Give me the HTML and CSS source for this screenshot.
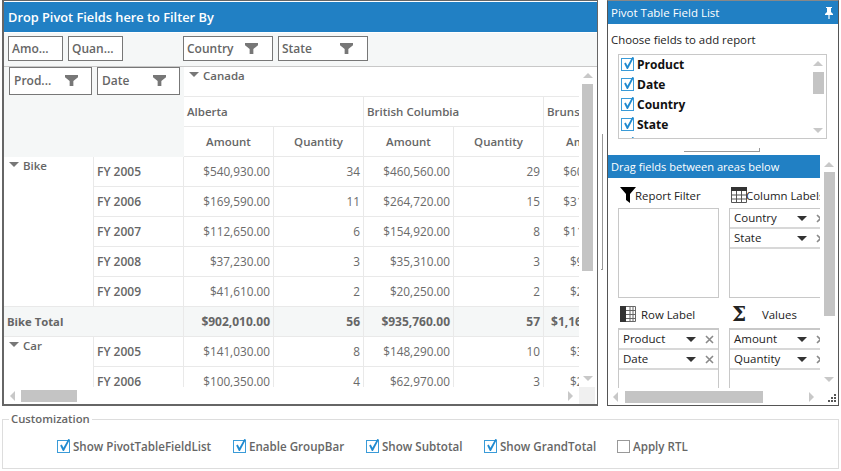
FILE: index.html
```html
<!DOCTYPE html>
<html>
<head>
	<meta charset="utf-8" />
	<title>Pivot Table</title>
	<link rel="stylesheet" href="styles.css">
</head>
<body>
<svg class="defs" width="0" height="0">
	<defs>
		<symbol id="funnel" viewBox="0 0 14 14"><path d="M0 1h14v2.500L9 7.500V13H5V7.500L0 3.500z"/></symbol>
		<symbol id="tick" viewBox="0 0 12 12"><path d="M2 6L3.500 5 5 8 9.500 0 11 .5 5.500 11H4.500z"/></symbol>
		<symbol id="cross" viewBox="0 0 9 9"><path d="M1 1l7 7M8 1L1 8" fill="none" stroke="#8a8a8a" stroke-width="1.6"/></symbol>
	</defs>
</svg>
<div class="top">
	<div class="pivot">
		<div class="pivot-head">Drop Pivot Fields here to Filter By</div>
		<div class="group-bar">
			<span class="chip chip-small">Amo...</span>
			<span class="chip chip-small">Quan...</span>
			<span class="chip chip-wide chip-first">Country<svg class="funnel"><use href="#funnel"/></svg></span>
			<span class="chip chip-wide">State<svg class="funnel"><use href="#funnel"/></svg></span>
		</div>
		<div class="pivot-body">
			<div class="grid-clip">
				<div class="grid">
					<div class="corner">
						<span class="chip chip-row">Prod...<svg class="funnel"><use href="#funnel"/></svg></span>
						<span class="chip chip-row">Date<svg class="funnel"><use href="#funnel"/></svg></span>
					</div>
					<div class="cell head-country"><i class="arrow"></i>Canada</div>

					<div class="cell state span2">Alberta</div>
					<div class="cell state span2">British Columbia</div>
					<div class="cell state span2">Brunswick</div>

					<div class="cell measure">Amount</div>
					<div class="cell measure">Quantity</div>
					<div class="cell measure">Amount</div>
					<div class="cell measure">Quantity</div>
					<div class="cell measure">Amount</div>
					<div class="cell measure">Quantity</div>

					<div class="cell group rows5"><i class="arrow"></i>Bike</div>
					<div class="cell year">FY 2005</div>
					<div class="cell num">$540,930.00</div><div class="cell num">34</div><div class="cell num">$460,560.00</div><div class="cell num">29</div><div class="cell num">$601,240.00</div><div class="cell num">31</div>
					<div class="cell year">FY 2006</div>
					<div class="cell num">$169,590.00</div><div class="cell num">11</div><div class="cell num">$264,720.00</div><div class="cell num">15</div><div class="cell num">$317,450.00</div><div class="cell num">17</div>
					<div class="cell year">FY 2007</div>
					<div class="cell num">$112,650.00</div><div class="cell num">6</div><div class="cell num">$154,920.00</div><div class="cell num">8</div><div class="cell num">$118,330.00</div><div class="cell num">7</div>
					<div class="cell year">FY 2008</div>
					<div class="cell num">$37,230.00</div><div class="cell num">3</div><div class="cell num">$35,310.00</div><div class="cell num">3</div><div class="cell num">$97,380.00</div><div class="cell num">5</div>
					<div class="cell year">FY 2009</div>
					<div class="cell num">$41,610.00</div><div class="cell num">2</div><div class="cell num">$20,250.00</div><div class="cell num">2</div><div class="cell num">$25,650.00</div><div class="cell num">2</div>

					<div class="cell total span2 total-label">Bike Total</div>
					<div class="cell total num">$902,010.00</div><div class="cell total num">56</div><div class="cell total num">$935,760.00</div><div class="cell total num">57</div><div class="cell total num">$1,160,050.00</div><div class="cell total num">62</div>

					<div class="cell group rows2"><i class="arrow"></i>Car</div>
					<div class="cell year">FY 2005</div>
					<div class="cell num">$141,030.00</div><div class="cell num">8</div><div class="cell num">$148,290.00</div><div class="cell num">10</div><div class="cell num">$39,570.00</div><div class="cell num">3</div>
					<div class="cell year">FY 2006</div>
					<div class="cell num">$100,350.00</div><div class="cell num">4</div><div class="cell num">$62,970.00</div><div class="cell num">3</div><div class="cell num">$27,340.00</div><div class="cell num">2</div>
				</div>
			</div>
			<div class="vbar pivot-vbar"><i class="up"></i><b class="pivot-vthumb"></b><i class="down"></i></div>
			<div class="hbar pivot-hbar"><i class="left"></i><b class="pivot-hthumb"></b><i class="right"></i></div>
			<div class="sb-corner"></div>
		</div>
	</div>

	<div class="splitter"></div>

	<div class="fields">
		<div class="fields-title">Pivot Table Field List
			<svg class="pin" viewBox="0 0 10 12" width="10" height="12"><path d="M2 0h6v1H7v4l2 2v1H5.600v4h-1.200V8H1V7l2-2V1H2z" fill="#fff"/></svg>
		</div>
		<div class="choose">Choose fields to add report</div>
		<div class="field-box">
			<ul class="field-list">
				<li><span class="check"><svg><use href="#tick"/></svg></span>Product</li>
				<li><span class="check"><svg><use href="#tick"/></svg></span>Date</li>
				<li><span class="check"><svg><use href="#tick"/></svg></span>Country</li>
				<li><span class="check"><svg><use href="#tick"/></svg></span>State</li>
				<li><span class="check"><svg><use href="#tick"/></svg></span>Amount</li>
			</ul>
			<div class="vbar list-vbar"><i class="up"></i><b class="list-vthumb"></b><i class="down"></i></div>
		</div>
		<div class="list-grip"></div>
		<div class="areas-wrap">
			<div class="areas-clip">
				<div class="areas-title">Drag fields between areas below</div>
				<div class="areas">
					<div class="area">
						<div class="area-label"><svg class="icon-filter" viewBox="0 0 16 16" width="16" height="16"><path d="M0 0h16L10 7v9l-4-3V7z"/></svg>Report Filter</div>
						<div class="drop"></div>
					</div>
					<div class="area">
						<div class="area-label">
							<svg class="icon-grid" viewBox="0 0 16 16" width="16" height="16"><rect width="16" height="4" fill="#333"/><path d="M.5 4v11.500h15V4M5.500 4v11M10.500 4v11M0 8h16M0 12h16" fill="none" stroke="#555"/></svg>Column Labels
						</div>
						<div class="drop">
							<div class="pill">Country<i class="caret"></i><svg class="x"><use href="#cross"/></svg></div>
							<div class="pill">State<i class="caret"></i><svg class="x"><use href="#cross"/></svg></div>
						</div>
					</div>
					<div class="area">
						<div class="area-label label-low">
							<svg class="icon-row" viewBox="0 0 16 16" width="16" height="16"><rect width="6" height="16" fill="#333"/><path d="M6 .5h9.500v15H6M10 0v16M13 0v16M6 4.500h10M6 8.500h10M6 12.500h10" fill="none" stroke="#666"/></svg>Row Label
						</div>
						<div class="drop drop-thick">
							<div class="pill">Product<i class="caret"></i><svg class="x"><use href="#cross"/></svg></div>
							<div class="pill">Date<i class="caret"></i><svg class="x"><use href="#cross"/></svg></div>
						</div>
					</div>
					<div class="area">
						<div class="area-label label-low"><span class="sigma">Σ</span>Values</div>
						<div class="drop drop-thick">
							<div class="pill">Amount<i class="caret"></i><svg class="x"><use href="#cross"/></svg></div>
							<div class="pill">Quantity<i class="caret"></i><svg class="x"><use href="#cross"/></svg></div>
						</div>
					</div>
				</div>
			</div>
			<div class="vbar areas-vbar"><i class="up"></i><b class="areas-vthumb"></b><i class="down"></i></div>
		</div>
		<div class="hbar fields-hbar"><i class="left"></i><b class="fields-hthumb"></b><i class="right"></i>
			<svg class="grip" viewBox="0 0 10 10" width="10" height="10"><path d="M7 0h2v2H7zM4 3h2v2H4zM7 3h2v2H7zM1 6h2v2H1zM4 6h2v2H4zM7 6h2v2H7z" fill="#555"/></svg>
		</div>
	</div>
</div>

<fieldset class="custom">
	<legend>Customization</legend>
	<div class="opts">
		<label class="opt"><span class="check"><svg><use href="#tick"/></svg></span>Show PivotTableFieldList</label>
		<label class="opt"><span class="check"><svg><use href="#tick"/></svg></span>Enable GroupBar</label>
		<label class="opt"><span class="check"><svg><use href="#tick"/></svg></span>Show Subtotal</label>
		<label class="opt"><span class="check"><svg><use href="#tick"/></svg></span>Show GrandTotal</label>
		<label class="opt"><span class="check check-off"></span>Apply RTL</label>
	</div>
</fieldset>
</body>
</html>
```
FILE: styles.css
```css
*{
margin:0;
padding:0;
box-sizing:border-box;
}
body{
font-family:"Open Sans","Noto Sans",sans-serif;
font-size:12px;
color:#555;
background:#fff;
overflow:hidden;
}
.defs{
position:absolute;
}
.top{
display:flex;
height:406px;
padding-left:2px;
}

/* pivot grid */
.pivot{
width:596px;
height:406px;
border:1px solid #666;
border-left-width:2px;
border-bottom-width:2px;
display:flex;
flex-direction:column;
}
.pivot-head{
height:30px;
margin-top:1px;
background:#2180c4;
color:#fff;
font-weight:600;
font-size:12.8px;
line-height:30px;
padding-left:4px;
}
.group-bar{
height:34px;
margin-top:1px;
background:#f5f7f7;
border-bottom:1px solid #c8c8c8;
display:flex;
align-items:flex-start;
gap:5px;
padding:3px 0 0 4px;
}
.chip{
height:25px;
border:1px solid #777;
background:#fff;
display:flex;
align-items:center;
justify-content:space-between;
font-weight:600;
color:#666;
padding:0 3px 1px 3px;
}
.chip-small{
width:55px;
}
.chip-wide{
width:90px;
padding-right:14px;
}
.chip-first{
margin-left:55px;
}
.chip-row{
width:83px;
height:28px;
padding-left:4px;
padding-right:13px;
}
.funnel{
width:13px;
height:13px;
fill:#777;
}
.pivot-body{
flex:1;
display:grid;
grid-template-columns:575px 16px;
grid-template-rows:320px 17px;
}
.grid-clip{
overflow:hidden;
}
.grid{
display:grid;
grid-template-columns:repeat(8,90px);
grid-auto-rows:30px;
width:720px;
font-size:11.5px;
}
.cell{
border-right:1px solid #e9e9e9;
border-bottom:1px solid #e9e9e9;
padding:0 3px;
line-height:29px;
white-space:nowrap;
overflow:hidden;
}
.corner{
grid-column:1 / span 2;
grid-row:1 / span 3;
background:#f5f7f7;
display:flex;
gap:5px;
padding-left:5px;
align-items:flex-start;
font-size:12px;
}
.head-country{
grid-column:3 / span 6;
border-right:0;
font-weight:600;
color:#666;
line-height:18px;
padding-left:5px;
}
.arrow{
display:inline-block;
width:0;
height:0;
border:5px solid transparent;
border-top:5px solid #777;
border-bottom:0;
margin-right:4px;
vertical-align:3px;
}
.state{
font-weight:600;
color:#666;
}
.span2{
grid-column:span 2;
}
.measure{
font-weight:600;
color:#666;
text-align:center;
}
.group{
grid-column:1;
font-weight:600;
color:#666;
line-height:18px;
padding-left:5px;
}
.rows5{
grid-row:span 5;
}
.rows2{
grid-row:span 2;
}
.year{
font-weight:600;
color:#666;
font-size:12px;
}
.num{
text-align:right;
color:#6a6a6a;
font-size:11.8px;
}
.total{
background:#f5f7f7;
font-weight:700;
color:#666;
font-size:12px;
}
.total-label{
padding-left:3px;
font-size:11.3px;
}

/* scrollbars */
.vbar{
display:flex;
flex-direction:column;
align-items:center;
justify-content:space-between;
}
.hbar{
display:flex;
align-items:center;
position:relative;
}
.vbar b,.hbar b{
background:#c4c4c4;
display:block;
}
.up,.down,.left,.right{
width:0;
height:0;
border:5px solid transparent;
flex:none;
}
.up{
border-bottom:5px solid #c8c8c8;
border-top:0;
}
.down{
border-top:5px solid #c8c8c8;
border-bottom:0;
}
.left{
border-right:5px solid #c8c8c8;
border-left:0;
}
.right{
border-left:5px solid #c8c8c8;
border-right:0;
}
.pivot-vbar{
padding:6px 0 6px 1px;
}
.pivot-vthumb{
width:11px;
height:187px;
margin-top:6px;
margin-bottom:auto;
}
.pivot-hbar{
padding-left:6px;
}
.pivot-hthumb{
width:56px;
height:12px;
margin-left:6px;
margin-right:auto;
}
.pivot-hbar .right{
margin-right:6px;
}
.sb-corner{
background:#f0f0f0;
}

/* splitter between grid and field list */
.splitter{
width:2px;
height:136px;
margin:134px 0 0 3px;
border-right:1px solid #999;
border-bottom:1px solid #999;
}

/* field list */
.fields{
width:232px;
height:406px;
margin-left:4px;
border:1px solid #555;
border-top-color:#888;
display:flex;
flex-direction:column;
color:#222;
font-size:11.4px;
}
.fields-title{
height:23px;
background:#2180c4;
color:#fff;
line-height:23px;
padding:0 3px;
display:flex;
justify-content:space-between;
align-items:center;
font-size:11.5px;
}
.pin{
margin-right:1px;
}
.choose{
height:30px;
line-height:31px;
padding-left:3px;
color:#222;
}
.field-box{
height:85px;
margin-left:10px;
width:209px;
border:1px solid #c8c8c8;
display:flex;
overflow:hidden;
}
.field-list{
list-style:none;
flex:1;
margin-top:-1px;
padding-left:2px;
font-weight:700;
font-size:12px;
color:#111;
}
.field-list li{
height:20px;
display:flex;
align-items:center;
}
.list-vbar{
width:12px;
margin-right:2px;
padding:6px 0 5px;
}
.list-vthumb{
width:11px;
height:22px;
margin-top:6px;
margin-bottom:auto;
}
.check{
width:13px;
height:13px;
border:1px solid #3a9bd8;
background:#fff;
display:inline-block;
margin-right:3px;
flex:none;
}
.check svg{
display:block;
width:13px;
height:13px;
margin:-2px 0 0 0;
fill:#1f8ad0;
overflow:visible;
}
.check-off{
border-color:#999;
}
.list-grip{
width:76px;
height:13px;
margin-left:76px;
border-bottom:1px solid #999;
flex:none;
position:relative;
}
.list-grip::after{
content:"";
position:absolute;
right:0;
bottom:0;
height:3px;
border-right:1px solid #999;
}
.areas-wrap{
display:flex;
height:233px;
margin-top:3px;
flex:none;
}
.areas-clip{
width:212px;
overflow:hidden;
flex:none;
}
.areas-title{
height:23px;
background:#2180c4;
color:#fff;
line-height:23px;
padding-left:3px;
font-size:11.1px;
}
.areas{
display:grid;
grid-template-columns:111px 110px;
grid-template-rows:120px 90px;
padding-left:10px;
width:240px;
}
.area-label{
height:30px;
display:flex;
align-items:center;
padding:4px 0 0;
white-space:nowrap;
}
.label-low{
padding-top:2px;
}
.icon-filter{
margin-left:2px;
margin-right:-1px;
flex:none;
}
.icon-grid{
margin-left:2px;
margin-right:-1px;
flex:none;
}
.icon-row{
margin-left:2px;
margin-right:5px;
flex:none;
}
.sigma{
font-family:"DejaVu Serif",serif;
font-size:20px;
font-weight:700;
color:#222;
width:33px;
line-height:18px;
padding-left:3px;
}
.drop{
width:101px;
height:90px;
border:1px solid #c8c8c8;
display:flex;
flex-direction:column;
}
.drop-thick{
border-top-width:2px;
}
.area:nth-child(2) .drop,.area:nth-child(4) .drop{
width:110px;
}
.pill{
height:20px;
border-bottom:2px solid #d8d8d8;
display:flex;
align-items:center;
padding:0 0 1px 4px;
position:relative;
font-size:11.5px;
}
.caret{
position:absolute;
left:67px;
top:7px;
border:5px solid transparent;
border-top:5px solid #333;
border-bottom:0;
width:0;
height:0;
}
.x{
position:absolute;
left:86px;
top:5px;
width:9px;
height:9px;
}
.areas-vbar{
width:12px;
margin-left:3px;
padding:7px 0 6px;
}
.areas-vthumb{
width:11px;
height:144px;
margin-top:5px;
margin-bottom:auto;
}
.fields-hbar{
height:16px;
padding-left:5px;
margin-top:auto;
}
.fields-hthumb{
width:138px;
height:12px;
margin-left:7px;
margin-right:auto;
}
.fields-hbar .right{
margin-right:24px;
}
.grip{
position:absolute;
right:1px;
bottom:1px;
}

/* customization */
.custom{
margin:6px 0 0 2px;
width:837px;
height:57px;
border:1px solid #ddd;
}
.custom legend{
margin-left:6px;
padding:0 2px;
color:#666;
font-weight:600;
font-size:11.3px;
line-height:14px;
}
.opts{
padding:12px 0 0 54px;
display:grid;
grid-template-columns:176px 133px 118px 133px auto;
}
.opt{
display:flex;
align-items:center;
height:16px;
color:#666;
font-weight:600;
font-size:11.6px;
}
```
